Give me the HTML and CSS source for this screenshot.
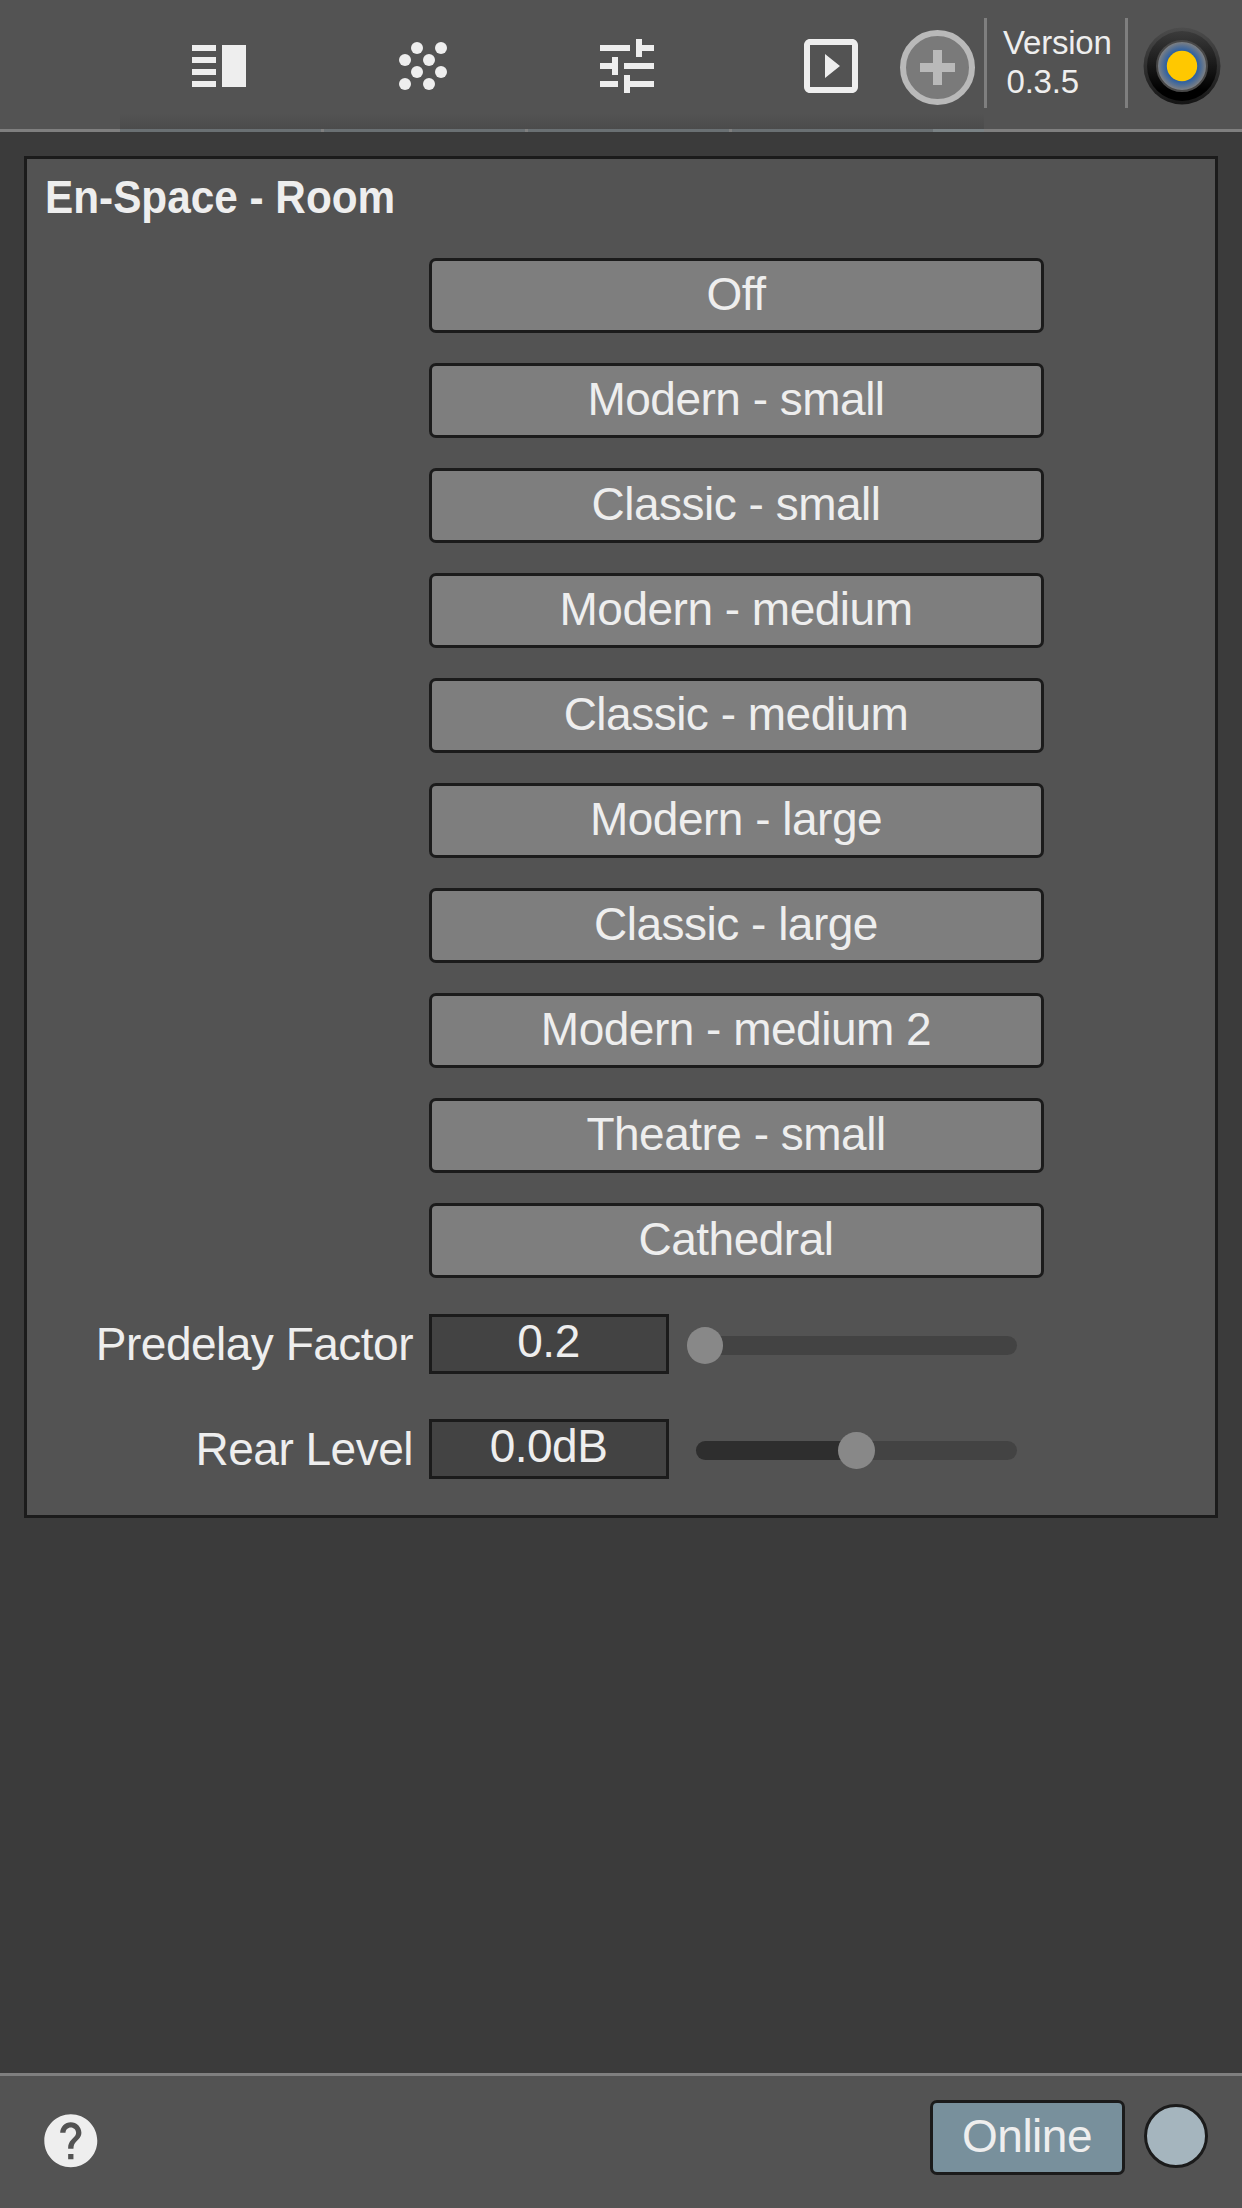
FILE: index.html
```html
<!DOCTYPE html>
<html lang="en">
<head>
<meta charset="utf-8">
<title>En-Space - Room</title>
<link rel="stylesheet" href="styles.css">
</head>
<body>
<header class="topbar">
  <nav class="tabs">
    <a class="tab"><svg class="icon" viewBox="0 0 24 24"><path d="M3 15h8v-2H3v2zm0 4h8v-2H3v2zm0-8h8V9H3v2zm0-6v2h8V5H3zm10 0h8v14h-8V5z"/></svg></a>
    <a class="tab"><svg class="icon" viewBox="0 0 24 24"><circle cx="10" cy="6" r="2"/><circle cx="18" cy="6" r="2"/><circle cx="6" cy="10" r="2"/><circle cx="14" cy="10" r="2"/><circle cx="10" cy="14" r="2"/><circle cx="18" cy="14" r="2"/><circle cx="6" cy="18" r="2"/><circle cx="14" cy="18" r="2"/></svg></a>
    <a class="tab"><svg class="icon" viewBox="0 0 24 24"><path d="M3 17v2h6v-2H3zM3 5v2h10V5H3zm10 16v-2h8v-2h-8v-2h-2v6h2zM7 9v2H3v2h4v2h2V9H7zm14 4v-2H11v2h10zm-6-4h2V7h4V5h-4V3h-2v6z"/></svg></a>
    <a class="tab"><svg class="icon" viewBox="0 0 24 24"><path d="M10 8v8l5-4-5-4zm9-5H5c-1.1 0-2 .9-2 2v14c0 1.1.9 2 2 2h14c1.1 0 2-.9 2-2V5c0-1.1-.9-2-2-2zm0 16H5V5h14v14z"/></svg></a>
    <span class="tab-rest"></span>
    <button class="add"><svg viewBox="0 0 75 75"><circle cx="37.5" cy="37.5" r="34.5"/><path d="M33 20h9v13h13v9H42v13h-9V42H20v-9h13z"/></svg></button>
  </nav>
  <div class="version"><span>Version</span><span class="number">0.3.5</span></div>
  <svg class="knob" viewBox="0 0 80 80">
    <defs>
      <linearGradient id="rim" x1="0" y1="0" x2="0" y2="1"><stop offset="0" stop-color="#4c4c4c"/><stop offset=".5" stop-color="#303030"/><stop offset="1" stop-color="#151515"/></linearGradient>
      <linearGradient id="body" x1="0" y1="0" x2="0" y2="1"><stop offset="0" stop-color="#3b3b3b"/><stop offset=".85" stop-color="#000"/></linearGradient>
      <radialGradient id="glow"><stop offset=".58" stop-color="#235ca6"/><stop offset=".95" stop-color="#7b7f84"/></radialGradient>
    </defs>
    <circle cx="40" cy="40" r="38.5" fill="url(#rim)"/>
    <circle cx="40" cy="40" r="35" fill="url(#body)"/>
    <circle cx="40" cy="40" r="25" fill="url(#glow)" stroke="#484848" stroke-width="2"/>
    <circle cx="40" cy="40" r="15.2" fill="#ffc800"/>
  </svg>
</header>
<main class="content">
  <section class="panel">
    <h1 class="title"><span>En-Space - Room</span></h1>
    <div class="rooms">
      <button class="room">Off</button>
      <button class="room">Modern - small</button>
      <button class="room">Classic - small</button>
      <button class="room">Modern - medium</button>
      <button class="room">Classic - medium</button>
      <button class="room">Modern - large</button>
      <button class="room">Classic - large</button>
      <button class="room">Modern - medium 2</button>
      <button class="room">Theatre - small</button>
      <button class="room">Cathedral</button>
    </div>
    <div class="param">
      <label class="label">Predelay Factor</label>
      <output class="value">0.2</output>
      <div class="slider"><div class="fill" style="width:2.8%"></div><div class="thumb" style="left:2.8%"></div></div>
    </div>
    <div class="param">
      <label class="label">Rear Level</label>
      <output class="value">0.0dB</output>
      <div class="slider"><div class="fill" style="width:50%"></div><div class="thumb" style="left:50%"></div></div>
    </div>
  </section>
</main>
<footer class="bottombar">
  <svg class="help" viewBox="0 0 24 24"><path d="M12 2C6.48 2 2 6.48 2 12s4.48 10 10 10 10-4.480 10-10S17.520 2 12 2zm1 17h-2v-2h2v2zm2.070-7.750l-.9.920C13.450 12.900 13 13.500 13 15h-2v-.5c0-1.100.450-2.100 1.170-2.830l1.240-1.260c.370-.360.590-.860.590-1.410 0-1.100-.9-2-2-2s-2 .9-2 2H8c0-2.210 1.790-4 4-4s4 1.790 4 4c0 .880-.360 1.680-.930 2.250z"/></svg>
  <button class="online">Online</button>
  <span class="status"></span>
</footer>
</body>
</html>
```

FILE: styles.css
```css
* {
  box-sizing: border-box;
}

body {
  margin: 0;
  height: 2208px;
  display: flex;
  flex-direction: column;
  background: #3b3b3b;
  color: #eee;
  font: 46px "Liberation Sans", Arial, sans-serif;
  letter-spacing: -.5px;
}

button {
  margin: 0;
  padding: 0;
  font: inherit;
  letter-spacing: inherit;
  color: inherit;
}

.topbar {
  height: 132px;
  flex: none;
  display: flex;
  align-items: flex-start;
  padding-left: 120px;
  background: linear-gradient(#7f7f7f, #7f7f7f) bottom / 100% 3px no-repeat #535353;
}

.tabs {
  position: relative;
  display: flex;
  width: 864px;
  height: 132px;
  background: linear-gradient(#4b4b4b00, #4b4b4b) 0 114px / 100% 15px no-repeat;
}

.tab {
  width: 204px;
  height: 132px;
  flex: none;
  padding: 30px 0 0 63px;
  background: linear-gradient(#6a7073, #6a7073) 0 100% / 201px 3px no-repeat;
}

.tab:nth-child(4) {
  width: 201px;
}

.tab-rest {
  flex: 1;
  align-self: flex-end;
  height: 3px;
  background: #7a8285;
}

.icon {
  display: block;
  width: 72px;
  height: 72px;
  fill: #eee;
}

.add {
  position: absolute;
  top: 30px;
  right: 9px;
  width: 75px;
  height: 75px;
  border: 0;
  background: none;
}

.add svg {
  display: block;
}

.add circle {
  fill: #7a7a7a;
  stroke: #b9b9b9;
  stroke-width: 6;
}

.add path {
  fill: #b9b9b9;
}

.version {
  display: flex;
  flex-direction: column;
  width: 144px;
  height: 90px;
  margin-top: 18px;
  padding: 5px 0 0 16px;
  border: solid #7f7f7f;
  border-width: 0 3px;
  font-size: 33px;
  letter-spacing: -.2px;
  line-height: 39px;
}

.version .number {
  padding-left: 3.5px;
}

.knob {
  width: 80px;
  height: 80px;
  margin: 25.5px 0 0 14px;
}

.content {
  flex: 1;
  padding: 24px;
}

.panel {
  height: 1362px;
  border: 3px solid #1b1b1b;
  background: #535353;
}

.title {
  margin: 0;
  padding: 8px 0 0 18px;
  height: 99px;
  font-size: 47px;
  letter-spacing: 0;
  line-height: 59px;
}

.title span {
  display: inline-block;
  transform: scaleX(.9);
  transform-origin: left;
}

.rooms {
  display: flex;
  flex-direction: column;
  gap: 30px;
  width: 615px;
  margin: 0 0 36px 402px;
}

.room,
.online {
  height: 75px;
  border: 3px solid #1b1b1b;
  border-radius: 7px;
  background: #7e7e7e;
  line-height: 65px;
  padding: 0 1px 2px 0;
}

.param {
  display: grid;
  grid-template-columns: 386px 240px 321px;
  grid-template-rows: 60px;
  height: 60px;
  margin-bottom: 45px;
}

.label {
  text-align: right;
  line-height: 61px;
}

.value {
  margin-left: 16px;
  margin-right: -16px;
  border: 3px solid #1b1b1b;
  background: #434343;
  line-height: 49px;
  padding-right: 1px;
  text-align: center;
}

.slider {
  position: relative;
  align-self: center;
  height: 19px;
  top: 1.5px;
  left: 43px;
  border-radius: 9.5px;
  background: #434343;
}

.fill {
  height: 100%;
  border-radius: 9.5px 0 0 9.5px;
  background: #2e2e2e;
}

.thumb {
  position: absolute;
  top: -9px;
  width: 36.5px;
  height: 37px;
  margin-left: -18.25px;
  border-radius: 50%;
  background: #888;
}

.bottombar {
  height: 135px;
  flex: none;
  display: flex;
  align-items: flex-start;
  padding: 24px 34px 0 38.5px;
  border-top: 3px solid #7f7f7f;
  background: #535353;
}

.help {
  width: 63.6px;
  height: 63.6px;
  margin: 8.6px auto 0 0;
  fill: #eee;
}

.online {
  width: 195px;
  background: #78909c;
}

.status {
  width: 64px;
  height: 64px;
  margin: 4px 0 0 19px;
  border: 3px solid #1b1b1b;
  border-radius: 50%;
  background: #a5b5be;
}
```
